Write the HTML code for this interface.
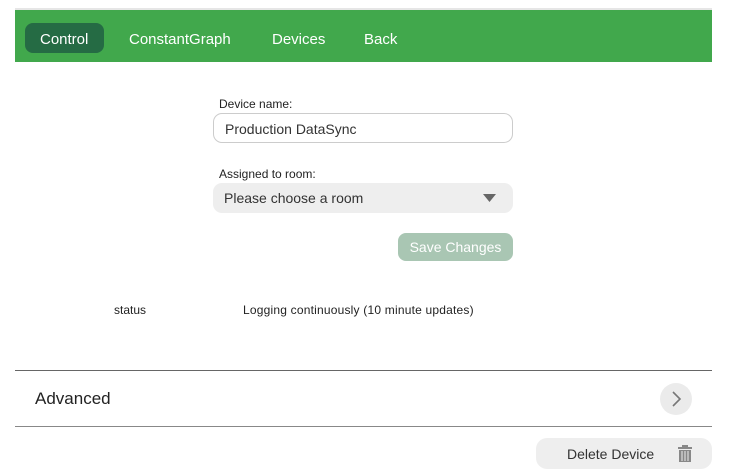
<!DOCTYPE html>
<html><head><style>
*{margin:0;padding:0;box-sizing:border-box}
body{width:733px;height:474px;background:#fff;font-family:"Liberation Sans",sans-serif;position:relative;overflow:hidden;color:#222}
.abs{position:absolute}
.bar{left:15px;top:8px;width:697px;height:2px;background:#e6e6e6}
.nav{left:15px;top:10px;width:697px;height:52px;background:#41a84c}
.nav span{position:absolute;top:20px;color:#fff;font-size:15px;line-height:20px;white-space:nowrap}
.pill{left:10px;top:13px;width:79px;height:30px;background:#256b44;border-radius:8px}
.lbl{font-size:12px;color:#222}
.inp{left:213px;top:113px;width:300px;height:30px;border:1px solid #ccc;border-radius:9px;font-size:14px;padding:7px 11px;color:#333}
.sel{left:213px;top:183px;width:300px;height:30px;background:#eee;border-radius:9px;font-size:14px;padding:7px 11px;color:#333}
.save{left:398px;top:233px;width:115px;height:28px;background:#a9c6b3;border-radius:8px;color:#fff;font-size:14px;text-align:center;line-height:29px}
.hr{left:15px;width:697px;height:1px;background:#666}
</style></head><body>
<div class="abs bar"></div>
<div class="abs nav">
<div class="abs pill"></div>
<span style="left:25px">Control</span>
<span style="left:114px">ConstantGraph</span>
<span style="left:257px">Devices</span>
<span style="left:349px">Back</span>
</div>
<div class="abs lbl" style="left:219px;top:97px">Device name:</div>
<div class="abs inp">Production DataSync</div>
<div class="abs lbl" style="left:219px;top:167px">Assigned to room:</div>
<div class="abs sel">Please choose a room
<svg class="abs" style="left:270px;top:11px" width="13" height="9"><path d="M0 0H13L6.5 8Z" fill="#666"/></svg></div>
<div class="abs save">Save Changes</div>
<div class="abs lbl" style="left:114px;top:303px">status</div>
<div class="abs lbl" style="left:243px;top:303px;letter-spacing:0.2px">Logging continuously (10 minute updates)</div>
<div class="abs hr" style="top:370px"></div>
<div class="abs" style="left:35px;top:389px;font-size:17px;color:#222">Advanced</div>
<div class="abs" style="left:660px;top:383px;width:32px;height:32px;border-radius:50%;background:#ebebeb">
<svg width="32" height="32"><path d="M13 9L20 16L13 23" fill="none" stroke="#777" stroke-width="1.6"/></svg></div>
<div class="abs hr" style="top:426px;background:#888"></div>
<div class="abs" style="left:536px;top:438px;width:176px;height:31px;background:#eee;border-radius:11px">
<span class="abs" style="left:31px;top:8px;font-size:14px;color:#333">Delete Device</span>
<svg class="abs" style="left:142px;top:7px" width="14" height="17"><rect x="4" y="0" width="6" height="2" fill="#888"/><rect x="0" y="2" width="14" height="2" fill="#888"/><rect x="1" y="5" width="12" height="12" fill="#888"/><path d="M4 6V16M7 6V16M10 6V16" stroke="#eee" stroke-width="1"/></svg>
</div>
</body></html>
